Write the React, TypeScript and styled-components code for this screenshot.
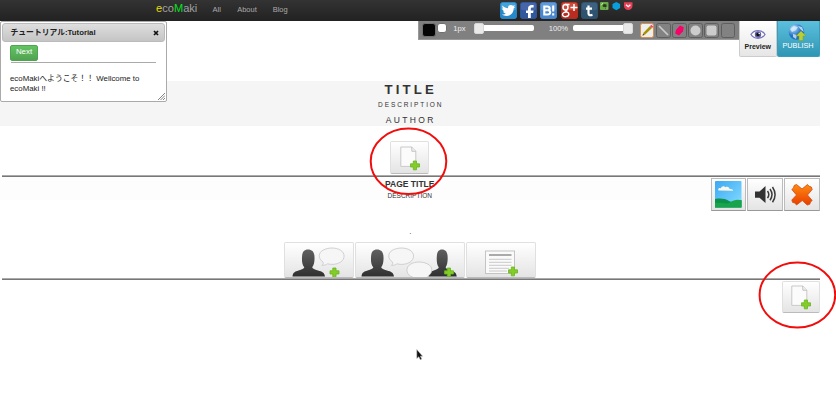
import React from 'react';
import styled, { createGlobalStyle } from 'styled-components';

const Global = createGlobalStyle`
  * { box-sizing: border-box; }
  body { margin: 0; background: #fff; overflow: hidden; font-family: "Liberation Sans", "Noto Sans CJK JP", sans-serif; color: #333; }
  svg { display: block; flex: none; }
  button { font-family: inherit; padding: 0; margin: 0; }
`;

const Page = styled.div`
  position: relative;
  width: 836px;
  height: 406px;
  overflow: hidden;
`;
const Column = styled.main`
  width: 819.5px;
  display: flex;
  flex-direction: column;
`;

const Nav = styled.nav`
  height: 21px;
  display: flex;
  padding-left: 156px;
  background: linear-gradient(#333, #222);
`;
const Brand = styled.a`
  width: 56.5px;
  font-size: 11.1px;
  line-height: 17px;
  color: #a0a0a0;
`;
const Letter = styled.span<{ $color: string }>`
  color: ${p => p.$color};
`;
const NavLink = styled.a<{ $width: number }>`
  width: ${p => p.$width}px;
  font-size: 7.5px;
  line-height: 19px;
  color: #aaa;
`;
const Shares = styled.div`
  display: flex;
  gap: 3.2px;
  padding-top: 2px;
`;
const SmallShares = styled(Shares)`
  gap: 3px;
  margin-left: -1px;
  padding-top: 0;
`;

const Tools = styled.div`
  height: 60px;
  display: flex;
  justify-content: flex-end;
  align-items: flex-start;
`;
const DrawBar = styled.div`
  width: 320.7px;
  height: 19px;
  display: flex;
  align-items: flex-start;
  padding: 2px 0 0 2.7px;
  background: #808080;
  border: solid #999;
  border-width: 0 0 1px 1px;
`;
const Swatch = styled.span<{ $size: number; $color: string }>`
  width: ${p => p.$size}px;
  height: ${p => p.$size}px;
  margin-right: 1px;
  background: ${p => p.$color};
  border: 1px solid #707070;
  border-radius: 3px;
`;
const BarLabel = styled.span<{ $width: number; $left: number }>`
  width: ${p => p.$width}px;
  margin-left: ${p => p.$left}px;
  font-size: 7.6px;
  line-height: 12px;
  color: #eee;
  white-space: nowrap;
`;
const Track = styled.span<{ $end?: boolean }>`
  width: 60px;
  height: 6px;
  margin-top: 2px;
  display: flex;
  align-items: center;
  justify-content: ${p => (p.$end ? 'flex-end' : 'flex-start')};
  border-radius: 2px;
  background: #fff;
`;
const Handle = styled.span`
  width: 10.5px;
  height: 11px;
  flex: none;
  border-radius: 2px;
  background: #e9e9e9;
  border: 1px solid #d8d8d8;
`;
const ToolSet = styled.div`
  display: flex;
  gap: 1.4px;
  margin-left: 6.5px;
`;
const Tool = styled.span<{ $active?: boolean }>`
  width: 14.8px;
  height: 15px;
  display: flex;
  align-items: center;
  justify-content: center;
  border: 1px solid ${p => (p.$active ? '#db8b4c' : '#5e5e5e')};
  border-radius: 2.5px;
  background: ${p => (p.$active ? '#eee' : '#828282')};
`;
const Action = styled.button<{ $primary?: boolean }>`
  width: ${p => (p.$primary ? 43 : 37.5)}px;
  height: ${p => (p.$primary ? 36 : 35.5)}px;
  display: flex;
  flex-direction: column;
  align-items: center;
  border: 1px solid ${p => (p.$primary ? '#3a9dbb' : '#ccc')};
  border-top: 0;
  border-radius: 0 0 2px 2px;
  padding-top: ${p => (p.$primary ? 3 : 8)}px;
  background: ${p => (p.$primary ? 'linear-gradient(#5bc0de, #2f96b4)' : 'linear-gradient(#fff, #e6e6e6)')};
  color: ${p => (p.$primary ? '#fff' : '#222')};
  font-size: ${p => (p.$primary ? 7.3 : 7)}px;
  line-height: ${p => (p.$primary ? 9 : 11)}px;
  font-weight: ${p => (p.$primary ? 400 : 700)};
`;

const Hero = styled.header`
  height: 45px;
  padding-left: 2px;
  background: #f5f5f5;
  text-align: center;
`;
const Title = styled.h1`
  margin: 0;
  font-size: 13.2px;
  line-height: 17px;
  letter-spacing: 3.2px;
`;
const Description = styled.p`
  margin: 0;
  font-size: 6.5px;
  line-height: 13px;
  letter-spacing: 1.9px;
`;
const Author = styled.p`
  margin: 0;
  padding-top: 1px;
  font-size: 8.5px;
  line-height: 17px;
  letter-spacing: 2.35px;
`;

const AddRow = styled.div<{ $end?: boolean }>`
  height: 49px;
  display: flex;
  justify-content: ${p => (p.$end ? 'flex-end' : 'center')};
  align-items: ${p => (p.$end ? 'flex-start' : 'flex-end')};
  padding: ${p => (p.$end ? '1px 0 0' : '0 0 1px')};
`;
const Tile = styled.button<{ $width: number; $height: number; $edge?: boolean }>`
  width: ${p => p.$width}px;
  height: ${p => p.$height}px;
  display: flex;
  align-items: center;
  justify-content: center;
  overflow: hidden;
  background: linear-gradient(#fff, #e4e4e4);
  border: 1px solid ${p => (p.$edge ? '#bbb' : '#e0e0e0')};
  border-bottom-color: ${p => (p.$edge ? '#999' : '#bbb')};
  border-radius: ${p => (p.$edge ? 0 : 2)}px;
`;
const Rule = styled.hr`
  width: 818px;
  height: 2px;
  flex: none;
  margin: 0 0 0 1.5px;
  border: 0;
  border-top: 1px solid #aaa;
  border-bottom: 1px solid #777;
`;
const Section = styled.section`
  height: 101px;
  display: grid;
  grid-template-columns: 1fr 220px 1fr;
  grid-template-rows: 65px 36px;
  background: linear-gradient(#fdfdfd 23px, #fff 23px);
`;
const Heading = styled.div`
  grid-column: 2;
  text-align: center;
`;
const PageTitle = styled.h2`
  margin: 0;
  font-size: 8.5px;
  line-height: 14px;
`;
const PageText = styled.p`
  margin: 0;
  font-size: 6.5px;
  line-height: 10px;
`;
const Dot = styled.p`
  margin: 0;
  padding: 25px 0 0 1px;
  font-size: 8px;
  line-height: 12px;
`;
const SideButtons = styled.div`
  display: flex;
  justify-content: flex-end;
  gap: 1.2px;
  padding-top: 1px;
`;
const Adders = styled.div`
  grid-column: 1 / -1;
  display: flex;
  justify-content: center;
  gap: 1px;
`;

const Dialog = styled.aside`
  position: absolute;
  left: 0;
  top: 21px;
  width: 167px;
  height: 81px;
  padding: 1px;
  background: #fff;
  border: 1px solid #aaa;
  border-radius: 2px;
`;
const DialogBar = styled.div`
  height: 19px;
  display: flex;
  justify-content: space-between;
  align-items: center;
  padding: 0 5px 2px 7.5px;
  border: 1px solid #bbb;
  border-radius: 3px;
  background: linear-gradient(#dedede, #c5c5c5);
  color: #222;
  font-size: 7.8px;
  font-weight: 700;
`;
const Close = styled.svg`
  position: relative;
  top: 1px;
`;
const Body = styled.div`
  padding: 3px 8px 0;
  font-size: 7.85px;
  line-height: 9.7px;
  color: #222;
`;
const Next = styled.button`
  display: block;
  width: 28px;
  height: 16px;
  border: 1px solid #51a351;
  border-radius: 2px;
  background: linear-gradient(#62c462, #51a351);
  color: #fff;
  font-size: 7.9px;
  line-height: 12px;
  padding-bottom: 2px;
`;
const Divider = styled.hr`
  width: 145px;
  height: 1px;
  margin: 1px 0 11px 1px;
  border: 0;
  background: #aaa;
`;
const Message = styled.p`
  margin: 0;
  white-space: nowrap;
`;
const Grip = styled.svg`
  position: absolute;
  right: 1px;
  bottom: 1px;
`;
const Marks = styled.svg`
  position: absolute;
  inset: 0;
  pointer-events: none;
`;

const Plus = ({ x, y }: { x: number; y: number }) => (
  <path
    transform={`translate(${x} ${y})`}
    d="M3.3 .5h3.2v2.8h3v3.2h-3v2.8H3.3V6.5H.5V3.3h2.8z"
    fill="#84cc27" stroke="#67b51e" strokeWidth=".8" strokeLinejoin="round"
  />
);

const AddPageIcon = () => (
  <svg width="37" height="30" viewBox="0 0 37 30">
    <path d="M9.800 4h11l4 4.200v15.200h-15z" fill="#fbfbfb" stroke="#c4c4c4" strokeWidth=".9" />
    <path d="M20.600 4l.3 4.300h4" fill="#eee" stroke="#b9b9b9" strokeWidth=".8" />
    <Plus x={19} y={17.5} />
  </svg>
);

const person = 'M0 27c.3-4 2.5-5 6-6 3.5-1 5.5-1.5 5.8-3.2-2-2-2.5-6-2.3-10C9.700 2.500 11.500 0 15.500 0s6.500 2.500 6.500 7.500c.2 4-.4 8-2.300 10.300.4 1.700 2.300 2.200 5.800 3.200 4 1 6.500 2 7 6z';
const Bubble = ({ x, y, flip }: { x: number; y: number; flip?: boolean }) => (
  <path
    transform={`translate(${x} ${y}) scale(${flip ? -1 : 1} 1)`}
    d="M4 14C-1.500 10.500-.5 4.500 4 2.200 9-.7 17-.7 21.500 2.200c5 3 4.500 9 0 12-4 2.400-9 2.700-13 1.600-1.500 1.200-3.500 1.700-5.500 1.500C4.200 16.300 4.500 15.300 4 14z"
    fill="#f6f6f6" stroke="#c6c6c6" strokeWidth=".8"
  />
);
const PersonFill = () => (
  <defs>
    <linearGradient id="person" x1="0" y1="0" x2="0" y2="1">
      <stop offset="0" stopColor="#606060" /><stop offset="1" stopColor="#303030" />
    </linearGradient>
  </defs>
);
const SpeakerIcon = () => (
  <svg width="68" height="34" viewBox="0 0 68 34">
    <PersonFill />
    <path d={person} transform="translate(7.500 6.500)" fill="url(#person)" />
    <Bubble x={34} y={5} />
    <Plus x={44.500} y={24.500} />
  </svg>
);
const TalkIcon = () => (
  <svg width="108" height="34" viewBox="0 0 108 34">
    <path d={person} transform="translate(5.500 6.500)" fill="url(#person)" />
    <path d={person} transform="translate(72.500 6.500) scale(.87 1)" fill="url(#person)" />
    <Bubble x={32.5} y={5} />
    <Bubble x={76} y={19} flip />
    <Plus x={88} y={24.500} />
  </svg>
);
const TextIcon = () => (
  <svg width="68" height="34" viewBox="0 0 68 34">
    <rect x="18.500" y="8" width="29" height="22.500" fill="#fafafa" stroke="#c4c4c4" />
    <path d="M22 12h22.500" stroke="#aaa" strokeWidth="1.900" />
    <path d="M22 16.300h22.500M22 19.300h22.500M22 22.300h22.500M22 25.300h20M22 28h18" stroke="#c4c4c4" strokeWidth=".9" />
    <Plus x={41} y={23.500} />
  </svg>
);

const Badge = ({ color, top, children }: { color: string; top: string; children: React.ReactNode }) => (
  <svg width="17" height="17" viewBox="0 0 17 17">
    <rect x=".4" y=".4" width="16.200" height="16.200" rx="2.500" fill={color} stroke={color} />
    <rect x="1" y=".7" width="15" height="7.500" rx="2" fill={top} opacity=".5" />
    {children}
  </svg>
);

export default function App() {
  return (
    <>
      <Global />
      <Page>
        <Column>
          <Nav>
            <Brand><Letter $color="#e5dc00">e</Letter>co<Letter $color="#00e51a">M</Letter>aki</Brand>
            <NavLink $width={24.7}>All</NavLink>
            <NavLink $width={35.5}>About</NavLink>
            <NavLink $width={227.3}>Blog</NavLink>
            <Shares>
              <Badge color="#2589cb" top="#6bbae6">
                <path d="M2.500 3.600C4 5.500 6 6.200 8.100 6.300 7.800 4 9.200 2.900 10.700 2.900c1 0 1.700.4 2.200.9l2-.5-1.200 1.600 1.600-.2-1.700 1.700c0 4.500-3.300 7.500-7 7.500-2 0-3.600-.5-4.800-1.300 1.800 0 3-.4 4-1.200-1.600-.3-2.300-1-2.700-2l1.300-.1C3 8.600 2.200 7.600 2.200 6.300l1.200.3C2.300 5.600 2 4.700 2.500 3.600z" fill="#fff" />
              </Badge>
              <Badge color="#31579c" top="#5c75b5">
                <path d="M8 16v-5H6V8.500h2V7c0-3 1.500-4 4-4h1.600v2.500h-1.300c-1.200 0-1.500.5-1.500 1.500v1.500h2.800l-.5 2.500h-2.300v5z" fill="#fff" />
              </Badge>
              <Badge color="#4a87cc" top="#77aee6">
                <path d="M4.300 4.500h3c3 0 3 3.500.7 3.800 3.100.2 3 4.200-.5 4.200H4.300zM4.500 8.300h3.300M13.200 3.500v6M13.200 11.300v2.200" fill="none" stroke="#fff" strokeWidth="2.100" />
              </Badge>
              <Badge color="#b82d20" top="#df6c55">
                <g fill="none" stroke="#fff" strokeWidth="1.500">
                  <ellipse cx="4.500" cy="5.300" rx="2.500" ry="2.800" />
                  <path d="M4 2.500h4.500M6.500 7.500l-2 1.500 3 2c2 4-6 5-6 1.500 0-2 3-2.700 5-2.500M9.500 5.500h7M13 2v7" />
                </g>
              </Badge>
              <Badge color="#2e5270" top="#4c7190">
                <path d="M7.500 3.500v8c0 2 1.700 2 4 1.400M5 6.700h6" fill="none" stroke="#fff" strokeWidth="2.200" />
              </Badge>
              <SmallShares>
                <svg width="9" height="9" viewBox="0 0 9 9">
                  <rect width="8.500" height="8" rx="1" fill="#67ac45" />
                  <path d="M2.500 3L4 2l2.500.5v4.300l-1.500.3.500-1.800-2.500-.6z" fill="#293b22" />
                  <path d="M1.200 3L3 1.300" stroke="#e3f2dc" /><path d="M5.500 6h2" stroke="#dbe8d5" strokeWidth=".8" />
                </svg>
                <svg width="9" height="9" viewBox="0 0 9 9">
                  <path d="M4.300 0l3.800 2v4L4.300 8.200.5 6V2z" fill="#08a0dc" />
                </svg>
                <svg width="9" height="9" viewBox="0 0 9 9">
                  <path d="M0 .3h8.500v3.500a4.200 4.200 0 0 1-8.500 0z" fill="#e93f56" />
                  <path d="M2 2.700l2.200 2 2.200-2" fill="none" stroke="#fff" strokeWidth="1.300" />
                </svg>
              </SmallShares>
            </Shares>
          </Nav>

          <Tools>
            <DrawBar>
              <Swatch $size={14} $color="#050505" />
              <Swatch $size={10} $color="#fff" />
              <BarLabel $width={20.5} $left={5.3}>1px</BarLabel>
              <Track><Handle /></Track>
              <BarLabel $width={24.5} $left={14.9}>100%</BarLabel>
              <Track $end><Handle /></Track>
              <ToolSet>
                <Tool $active>
                  <svg width="13" height="13" viewBox="0 0 13 13">
                    <path d="M1.500 11.500l1-2.800L9 2l2 2-6.800 6.500z" fill="#aa9200" />
                    <path d="M9 2l1.300-1.200 2 2L11 4z" fill="#ef3e80" /><path d="M1.500 11.500l.6-1.600 1 1z" fill="#222" />
                  </svg>
                </Tool>
                <Tool><svg width="13" height="13"><path d="M2 2l9 9" stroke="#c9c9c9" strokeWidth="1.700" /></svg></Tool>
                <Tool><svg width="13" height="13"><path d="M7 1.500l3.800 1.700-.8 4L6 11.500 2.200 9.500 3 6z" fill="#fa0069" /></svg></Tool>
                <Tool><svg width="13" height="13"><circle cx="6.500" cy="6.500" r="5" fill="#ccc" /></svg></Tool>
                <Tool><svg width="13" height="13"><rect x="1.500" y="1.500" width="10" height="10" rx="2" fill="#ccc" /></svg></Tool>
                <Tool />
              </ToolSet>
            </DrawBar>
            <Action>
              <svg width="16" height="12" viewBox="0 0 16 12">
                <path d="M1 5.500C4 .3 12 .3 15 5.500 12 10.500 4 10.500 1 5.500z" fill="#fff" stroke="#7774b9" strokeWidth="1.300" />
                <circle cx="8" cy="5.500" r="3.200" fill="#625da5" /><circle cx="8" cy="5.500" r="1.700" fill="#111" />
                <circle cx="9.200" cy="4.500" r=".8" fill="#fff" />
              </svg>
              Preview
            </Action>
            <Action $primary>
              <svg width="20" height="17" viewBox="0 0 20 17">
                <defs><radialGradient id="globe" cx=".3" cy=".25"><stop stopColor="#bce5ff" /><stop offset="1" stopColor="#226fc4" /></radialGradient></defs>
                <circle cx="8.500" cy="8" r="7.800" fill="url(#globe)" />
                <path d="M2 5l4-3 4 1-2 3-4 2zM10 2l4 1 2 5-3-2zM5 10l4 1-1 4-3-2z" fill="#e1f2fb" opacity=".75" />
                <path d="M13 7l5 5h-3v4.500h-4V12H8z" fill="#b8cf37" stroke="#82a221" strokeWidth=".6" />
              </svg>
              PUBLISH
            </Action>
          </Tools>

          <Hero>
            <Title>TITLE</Title>
            <Description>DESCRIPTION</Description>
            <Author>AUTHOR</Author>
          </Hero>
          <AddRow><Tile $width={39} $height={33}><AddPageIcon /></Tile></AddRow>
          <Rule />
          <Section>
            <Heading>
              <PageTitle>PAGE TITLE</PageTitle>
              <PageText>DESCRIPTION</PageText>
              <Dot>.</Dot>
            </Heading>
            <SideButtons>
              <Tile $width={35.5} $height={33} $edge>
                <svg width="27" height="27" viewBox="0 0 27 27">
                  <defs><linearGradient id="sky" x2="1" y2="1"><stop stopColor="#3ba9f4" /><stop offset="1" stopColor="#87ddff" /></linearGradient></defs>
                  <rect width="26.500" height="26.500" rx="1" fill="url(#sky)" />
                  <path d="M3.500 9.500c-1-2 1-3 2.500-2 0-2 3-3 4.500-1.300 2-1 4 .2 4 1.800 2-.3 4 .4 3.500 1.800z" fill="#fbf6e5" />
                  <path d="M0 18c5-1 10-.5 14 2 4 2.500 8 0 12.500-1v7.500H0z" fill="#0c9149" />
                  <path d="M0 26.500V22c6-1 11 2 15-.5s7-3.500 11.500-2v7z" fill="#19a34b" />
                </svg>
              </Tile>
              <Tile $width={35.5} $height={33} $edge>
                <svg width="24" height="24" viewBox="0 0 24 24">
                  <path d="M2 8.500h4.500L12.500 3v17l-6-5.300H2z" fill="#333" />
                  <path d="M14.500 8c1.500 2 1.500 5 0 7.200M17 6c2.500 3.500 2.500 7.700 0 11.200M19.500 4c3.300 5 3.300 10.500 0 15.200" fill="none" stroke="#3b3b3b" strokeWidth="1.500" />
                </svg>
              </Tile>
              <Tile $width={35.5} $height={33} $edge>
                <svg width="24" height="24" viewBox="0 0 24 24">
                  <defs><linearGradient id="cross" x2="0" y2="1"><stop stopColor="#ff8a12" /><stop offset="1" stopColor="#e83d00" /></linearGradient></defs>
                  <path d="M6.500 1.500L12 6l5.500-4.500L19 3.200l2.300.8.900 2.500-4.700 5.500 4.700 5.500-1.700 1.500-.8 2.300-2.500.7-4.900-4.500L6.500 22l-1.500-2-2.400-.6L1.800 17l4.700-5L1.800 6.500l1.700-1.600.7-2.400z" fill="url(#cross)" stroke="#d04a10" strokeWidth=".8" strokeLinejoin="round" />
                </svg>
              </Tile>
            </SideButtons>
            <Adders>
              <Tile $width={70} $height={36}><SpeakerIcon /></Tile>
              <Tile $width={110.5} $height={36}><TalkIcon /></Tile>
              <Tile $width={70} $height={36}><TextIcon /></Tile>
            </Adders>
          </Section>
          <Rule />
          <AddRow $end><Tile $width={38} $height={32}><AddPageIcon /></Tile></AddRow>
        </Column>

        <Dialog>
          <DialogBar>
            <span>チュートリアル:Tutorial</span>
            <Close width="6" height="6" viewBox="0 0 6 6"><path d="M1 1l4 4M5 1L1 5" stroke="#111" strokeWidth="1.700" /></Close>
          </DialogBar>
          <Body>
            <Next>Next</Next>
            <Divider />
            <Message>ecoMakiへようこそ！！ Wellcome to<br />ecoMaki !!</Message>
          </Body>
          <Grip width="7" height="7"><path d="M0 7L7 0M2.500 7L7 2.500M5 7l2-2" stroke="#777" strokeWidth=".9" /></Grip>
        </Dialog>

        <Marks width="836" height="406" fill="none" stroke="#f20d0d" strokeWidth="2">
          <ellipse cx="408.500" cy="161.300" rx="37.800" ry="32.700" />
          <ellipse cx="797.400" cy="295" rx="37.800" ry="32.500" />
          <path d="M416.800 349.500v9l2-1.800 1.500 3 1.500-.8-1.500-2.700h2.300z" fill="#111" stroke="#bbb" strokeWidth=".5" />
        </Marks>
      </Page>
    </>
  );
}
